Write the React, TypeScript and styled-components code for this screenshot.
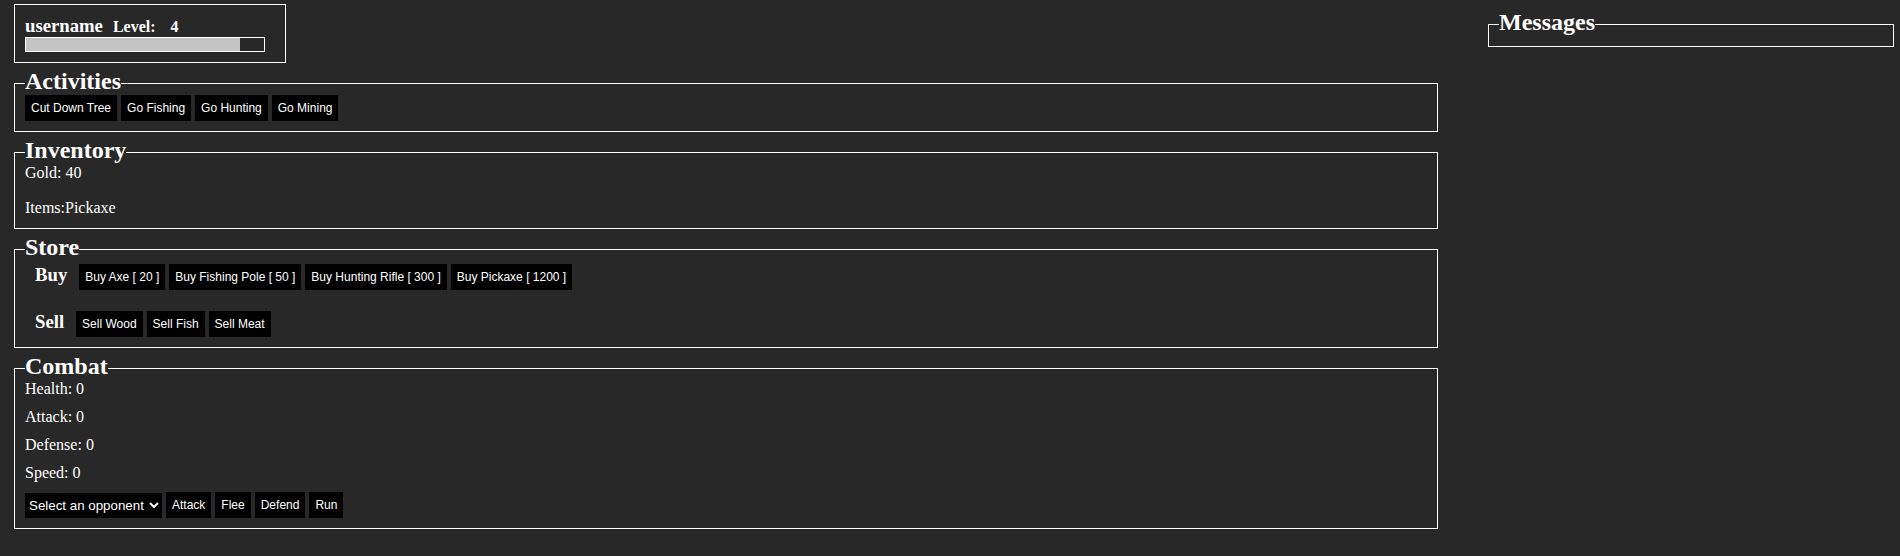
import React from "react";
import styled, { createGlobalStyle } from "styled-components";

const GlobalStyle = createGlobalStyle`
  html, body {
    margin: 0;
    padding: 0;
    background: #282828;
    color: #ffffff;
    font-family: "Liberation Serif", "Times New Roman", serif;
    font-size: 16px;
  }
  * { box-sizing: border-box; }
`;

const Page = styled.div`
  display: grid;
  grid-template-columns: 1fr 406px;
  column-gap: 50px;
  padding: 4px 6px 0 14px;
  align-items: start;
`;

const MainColumn = styled.div`
  display: flex;
  flex-direction: column;
  gap: 9px;
`;

const SideColumn = styled.div`
  padding-top: 9px;
`;

const PlayerCard = styled.div`
  width: 272px;
  border: 1px solid #ffffff;
  padding: 10px;
`;

const PlayerRow = styled.div`
  display: flex;
  align-items: baseline;
  height: 22px;
  line-height: 21.5px;
`;

const Username = styled.span`
  font-size: 18.72px;
  font-weight: bold;
  margin-right: 10px;
`;

const LevelLabel = styled.span`
  font-size: 16px;
  font-weight: bold;
`;

const LevelValue = styled.span`
  font-size: 16px;
  font-weight: bold;
  margin-left: 15px;
`;

const XpBar = styled.div`
  width: 240px;
  height: 15px;
  border: 1px solid #ffffff;
`;

const XpFill = styled.div`
  height: 100%;
  background: #c4c4c4;
`;

const Panel = styled.fieldset`
  margin: 0;
  min-width: 0;
  border: 1px solid #ffffff;
  padding: 0 10px 10px 10px;
`;

const PanelTitle = styled.legend`
  font-size: 24px;
  font-weight: bold;
  line-height: 18px;
  padding: 0 0 5px 0;
`;

const ButtonRow = styled.div`
  display: flex;
  align-items: center;
  gap: 4px;
`;

const ActionButton = styled.button`
  font-family: "Liberation Sans", Arial, sans-serif;
  font-size: 12px;
  line-height: 14px;
  height: 26px;
  padding: 6px;
  border: none;
  border-radius: 0;
  background: #000000;
  color: #ffffff;
  cursor: pointer;
`;

const Line = styled.p<{ $after?: number }>`
  margin: 0 0 ${(p) => p.$after ?? 0}px 0;
  line-height: 18.4px;
`;

const StoreRow = styled.div<{ $top: number }>`
  display: flex;
  align-items: baseline;
  margin-top: ${(p) => p.$top}px;
`;

const StoreLabel = styled.span`
  font-size: 18.72px;
  line-height: 21.5px;
  font-weight: bold;
  margin: 0 12px 0 10px;
`;

const StoreButtons = styled.div`
  display: flex;
  align-items: baseline;
  gap: 4px;
`;

const OpponentSelect = styled.select`
  font-family: "Liberation Sans", Arial, sans-serif;
  font-size: 13.333px;
  width: 137px;
  height: 25px;
  border: none;
  border-radius: 0;
  background: #000000;
  color: #ffffff;
  padding: 0;
`;

const activities = ["Cut Down Tree", "Go Fishing", "Go Hunting", "Go Mining"];
const buyItems = [
  "Buy Axe [ 20 ]",
  "Buy Fishing Pole [ 50 ]",
  "Buy Hunting Rifle [ 300 ]",
  "Buy Pickaxe [ 1200 ]",
];
const sellItems = ["Sell Wood", "Sell Fish", "Sell Meat"];
const stats = [
  ["Health", 0],
  ["Attack", 0],
  ["Defense", 0],
  ["Speed", 0],
] as const;

export default function App() {
  const xp = 90;
  return (
    <>
      <GlobalStyle />
      <Page>
        <MainColumn>
          <PlayerCard>
            <PlayerRow>
              <Username>username</Username>
              <LevelLabel>Level:</LevelLabel>
              <LevelValue>4</LevelValue>
            </PlayerRow>
            <XpBar>
              <XpFill style={{ width: `${xp}%` }} />
            </XpBar>
          </PlayerCard>

          <Panel>
            <PanelTitle>Activities</PanelTitle>
            <ButtonRow>
              {activities.map((a) => (
                <ActionButton key={a}>{a}</ActionButton>
              ))}
            </ButtonRow>
          </Panel>

          <Panel>
            <PanelTitle>Inventory</PanelTitle>
            <Line $after={17}>Gold: 40</Line>
            <Line>Items:Pickaxe</Line>
          </Panel>

          <Panel>
            <PanelTitle>Store</PanelTitle>
            <StoreRow $top={3}>
              <StoreLabel>Buy</StoreLabel>
              <StoreButtons>
                {buyItems.map((b) => (
                  <ActionButton key={b}>{b}</ActionButton>
                ))}
              </StoreButtons>
            </StoreRow>
            <StoreRow $top={21}>
              <StoreLabel>Sell</StoreLabel>
              <StoreButtons>
                {sellItems.map((s) => (
                  <ActionButton key={s}>{s}</ActionButton>
                ))}
              </StoreButtons>
            </StoreRow>
          </Panel>

          <Panel>
            <PanelTitle>Combat</PanelTitle>
            {stats.map(([name, value]) => (
              <Line key={name} $after={9.75}>
                {name}: {value}
              </Line>
            ))}
            <ButtonRow>
              <OpponentSelect defaultValue="">
                <option value="">Select an opponent</option>
                <option value="goblin">Goblin</option>
                <option value="wolf">Wolf</option>
              </OpponentSelect>
              <ActionButton>Attack</ActionButton>
              <ActionButton>Flee</ActionButton>
              <ActionButton>Defend</ActionButton>
              <ActionButton>Run</ActionButton>
            </ButtonRow>
          </Panel>
        </MainColumn>

        <SideColumn>
          <Panel>
            <PanelTitle>Messages</PanelTitle>
          </Panel>
        </SideColumn>
      </Page>
    </>
  );
}
